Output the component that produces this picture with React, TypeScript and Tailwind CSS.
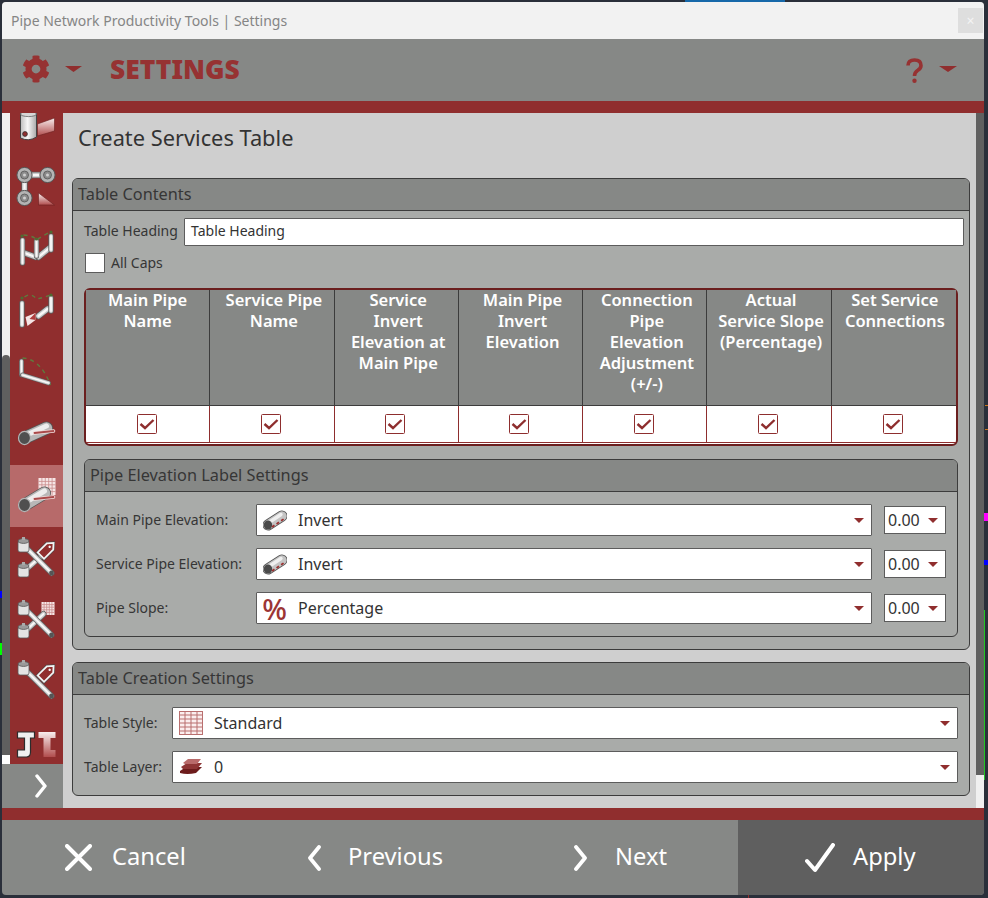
import { FaCog } from 'react-icons/fa';
import type { ReactNode } from 'react';

const RED = '#902e2e';

const Pipe = ({ x1, y1, x2, y2, w = 4 }: { x1: number; y1: number; x2: number; y2: number; w?: number }) => (
  <g strokeLinecap="round">
    <line x1={x1} y1={y1} x2={x2} y2={y2} stroke="#5c5c5c" strokeWidth={w + 1.4} />
    <line x1={x1} y1={y1} x2={x2} y2={y2} stroke="#c9c9c9" strokeWidth={w} />
    <line x1={x1} y1={y1} x2={x2} y2={y2} stroke="#f8f8f8" strokeWidth={w * 0.45} />
  </g>
);

const Ring = ({ cx, cy }: { cx: number; cy: number }) => (
  <g>
    <circle cx={cx} cy={cy} r="7.6" fill="#b4b4b4" stroke="#555" strokeWidth="1" />
    <circle cx={cx} cy={cy} r="4" fill="#8c8c8c" stroke="#555" strokeWidth="0.8" />
    <circle cx={cx} cy={cy} r="1.5" fill="#d0d0d0" />
  </g>
);

const Node = ({ cx, cy }: { cx: number; cy: number }) => (
  <g>
    <rect x={cx - 5.5} y={cy - 4} width="11" height="11" rx="2" fill="#e4e4e4" stroke="#555" strokeWidth="0.8" />
    <ellipse cx={cx} cy={cy - 4} rx="5.5" ry="2.4" fill="#9a9a9a" stroke="#555" strokeWidth="0.8" />
    <rect x={cx - 1.5} y={cy - 8} width="3" height="3" fill="#aaa" />
  </g>
);

const MiniGrid = ({ x, y, s, color = '#c98a8a' }: { x: number; y: number; s: number; color?: string }) => (
  <g>
    <rect x={x} y={y} width={s} height={s} fill="#f6e6e6" />
    {[0.2, 0.4, 0.6, 0.8].map((f) => (
      <g key={f} stroke={color} strokeWidth="0.8">
        <line x1={x + s * f} y1={y} x2={x + s * f} y2={y + s} />
        <line x1={x} y1={y + s * f} x2={x + s} y2={y + s * f} />
      </g>
    ))}
  </g>
);

const Tag = ({ cx, cy }: { cx: number; cy: number }) => {
  const d = `M${cx - 4.5} ${cy - 5} L${cx} ${cy - 10} L${cx + 4.5} ${cy - 5} V${cy + 8} H${cx - 4.5} Z`;
  return (
    <g transform={`rotate(45 ${cx} ${cy})`}>
      <path d={d} fill={RED} stroke="#4a4a4a" strokeWidth="3" />
      <path d={d} fill={RED} stroke="#f4f4f4" strokeWidth="1.8" />
      <circle cx={cx} cy={cy - 4.5} r="1.2" fill="#f4f4f4" />
    </g>
  );
};

const FatPipe = ({ ex, ey, tx, ty, sy }: { ex: number; ey: number; tx: number; ty: number; sy: number }) => (
  <g>
    <line x1={ex} y1={ey} x2={tx} y2={ty} stroke="#555" strokeWidth="13" strokeLinecap="round" />
    <line x1={ex} y1={ey} x2={tx} y2={ty} stroke="#b8b8b8" strokeWidth="11.4" strokeLinecap="round" />
    <line x1={ex} y1={ey - 2} x2={tx} y2={ty - 2} stroke="#ededed" strokeWidth="5" strokeLinecap="round" />
    <ellipse cx={ex} cy={ey} rx="6" ry="6.6" fill="#4f4f4f" stroke="#b5b5b5" strokeWidth="1.2" />
    <line x1={ex + 10} y1={sy + 2} x2={53} y2={sy} stroke="#f2dede" strokeWidth="3.6" strokeLinecap="round" />
    <line x1={ex + 10} y1={sy + 2} x2={53} y2={sy} stroke="#a94a4a" strokeWidth="1.8" strokeLinecap="round" />
  </g>
);

const Dashes = ({ d }: { d: string }) => (
  <path d={d} fill="none" stroke="#5f7a3e" strokeWidth="1.4" strokeDasharray="4 4" />
);

type SideItem = { top: number; active?: boolean; draw: ReactNode };

// viewBox uses the same numbers as the screen, so each icon is offset by its row
const sideItems: SideItem[] = [
  {
    top: 100,
    draw: (
      <g>
        <path d="M37 124 L54 118 V131 L37 136 Z" fill="url(#pinkPipe)" stroke="#6a2020" strokeWidth="0.6" />
        <path d="M20 110 H36 V137 Q28 142 20 138 Z" fill="url(#steel)" stroke="#444" strokeWidth="1" />
        <ellipse cx="28" cy="114" rx="8" ry="2.6" fill="#d6d6d6" stroke="#555" strokeWidth="0.7" />
        <circle cx="24.5" cy="134" r="2.4" fill={RED} stroke="#333" strokeWidth="0.8" />
      </g>
    ),
  },
  {
    top: 162,
    draw: (
      <g>
        <Pipe x1={24} y1={175} x2={47} y2={175} w={5} />
        <Pipe x1={24} y1={175} x2={24} y2={198} w={5} />
        <Ring cx={24} cy={175} />
        <Ring cx={47} cy={175} />
        <Ring cx={24} cy={198} />
        <path d="M38 193 L54 205 H38 Z" fill="url(#pinkPipe)" stroke="#6a2020" strokeWidth="0.6" />
      </g>
    ),
  },
  {
    top: 224,
    draw: (
      <g>
        <Pipe x1={24} y1={253} x2={35} y2={257} w={5} />
        <Pipe x1={38} y1={257} x2={49} y2={248} w={5} />
        <Pipe x1={22} y1={240} x2={22} y2={263} w={4} />
        <Pipe x1={36} y1={241} x2={36} y2={256} w={4} />
        <Pipe x1={50.5} y1={236} x2={50.5} y2={250} w={4} />
        <Dashes d="M23 235 Q34 236 36 240 Q42 236 50 232" />
        <circle cx="21.5" cy="236" r="1.6" fill="#4e6b32" />
        <circle cx="36" cy="239" r="1.6" fill="#4e6b32" />
        <circle cx="50.5" cy="232" r="1.6" fill="#4e6b32" />
      </g>
    ),
  },
  {
    top: 286,
    draw: (
      <g>
        <Pipe x1={38} y1={316} x2={47} y2={309} w={5} />
        <Pipe x1={21.5} y1={303} x2={21.5} y2={325} w={4} />
        <Pipe x1={50.5} y1={298} x2={50.5} y2={311} w={4} />
        <path d="M25 317 L35 313 V320 L27 326 Z" fill="#f4e4e4" />
        <path d="M29 319 L35 313 V320 Z" fill="#b03c3c" />
        <Dashes d="M24 297 Q30 292 36 299 Q42 298 50 295" />
        <circle cx="21.5" cy="298" r="1.6" fill="#4e6b32" />
        <circle cx="50.5" cy="295" r="1.6" fill="#4e6b32" />
      </g>
    ),
  },
  {
    top: 348,
    draw: (
      <g>
        <Pipe x1={21} y1={361} x2={21} y2={375} w={3.5} />
        <Pipe x1={22} y1={375} x2={48} y2={383} w={3.5} />
        <Dashes d="M22 358 Q40 359 50 385" />
      </g>
    ),
  },
  { top: 410, draw: <FatPipe ex={24} ey={438} tx={46} ty={428} sy={431} /> },
  {
    top: 472,
    active: true,
    draw: (
      <g>
        <MiniGrid x={38} y={478} s={17} />
        <FatPipe ex={24} ey={505} tx={44} ty={493} sy={497} />
      </g>
    ),
  },
  {
    top: 534,
    draw: (
      <g>
        <Pipe x1={25} y1={570} x2={42} y2={555} w={4.5} />
        <Pipe x1={24} y1={546} x2={51} y2={573} w={4.5} />
        <circle cx="51" cy="573" r="2.4" fill="#555" />
        <Node cx={23} cy={545} />
        <Node cx={23} cy={570} />
        <Tag cx={46} cy={550} />
      </g>
    ),
  },
  {
    top: 596,
    draw: (
      <g>
        <MiniGrid x={41} y={602} s={13} />
        <Pipe x1={25} y1={631} x2={43} y2={614} w={4.5} />
        <Pipe x1={24} y1={608} x2={51} y2={635} w={4.5} />
        <circle cx="51" cy="635" r="2.4" fill="#555" />
        <Node cx={23} cy={608} />
        <Node cx={23} cy={631} />
      </g>
    ),
  },
  {
    top: 658,
    draw: (
      <g>
        <Pipe x1={24} y1={669} x2={51} y2={696} w={4.5} />
        <circle cx="51" cy="696" r="2.4" fill="#555" />
        <Node cx={23} cy={668} />
        <Tag cx={46} cy={673} />
      </g>
    ),
  },
  {
    top: 720,
    draw: (
      <g>
        <path
          d="M17 732 H34 V738 H30 V752 Q30 757 26 757 H17 V750 H24 V738 H17 Z"
          fill="#f0f0f0"
          stroke="#2c2c2c"
          strokeWidth="1.2"
        />
        <path d="M38 732 H55 V738 H50 V750 H55 V757 H43 V738 H38 Z" fill="url(#pinkPipe)" />
      </g>
    ),
  },
];

const Caret = ({ className }: { className: string }) => (
  <svg viewBox="0 0 10 6" preserveAspectRatio="none" className={className}>
    <path d="M0 0 H10 L5 6 Z" fill={RED} />
  </svg>
);

const PipeGlyph = () => (
  <svg viewBox="0 0 24 22" className="h-[22px] w-[24px]">
    <line x1="5" y1="16" x2="19" y2="7" stroke="#555" strokeWidth="11" strokeLinecap="round" />
    <line x1="5" y1="16" x2="19" y2="7" stroke="#c4c4c4" strokeWidth="9.4" strokeLinecap="round" />
    <line x1="6" y1="13.5" x2="18" y2="5.5" stroke="#efefef" strokeWidth="3.4" strokeLinecap="round" />
    <ellipse cx="5" cy="16" rx="4.2" ry="4.6" fill="#4a4a4a" />
    <line x1="9" y1="18" x2="21.5" y2="9.5" stroke="#9c2f2f" strokeWidth="1.8" strokeDasharray="3 2.5" />
  </svg>
);

const GridGlyph = () => (
  <svg viewBox="0 0 24 24" className="h-[24px] w-[24px]">
    <rect x="0.5" y="0.5" width="23" height="23" fill="#fbeeee" stroke="#b96f6f" />
    {[4, 8, 12, 16, 20].map((v) => (
      <line key={v} x1="0.5" y1={v} x2="23.5" y2={v} stroke="#b96f6f" />
    ))}
    {[6, 12, 18].map((v) => (
      <line key={v} x1={v} y1="0.5" x2={v} y2="23.5" stroke="#b96f6f" />
    ))}
  </svg>
);

const LayersGlyph = () => (
  <svg viewBox="0 0 24 16" className="h-[16px] w-[24px]">
    <path d="M1 12 L7 8 H23 L17 14 Q8 16 1 14 Z" fill="#6d1c1c" />
    <path d="M2 8 L8 4 H23 L18 10 H4 Z" fill="#8e3535" />
    <path d="M4 4 L9 0 H22 L18 5 H6 Z" fill="#b86a6a" />
  </svg>
);

const Tick = () => (
  <svg viewBox="0 0 20 20" className="h-[20px] w-[20px]">
    <rect x="0.5" y="0.5" width="19" height="19" rx="1" fill="#fff" stroke="#8e2e2e" />
    <path d="M3.5 10 L8 14 L16.5 6" fill="none" stroke="#8e2e2e" strokeWidth="2.4" />
  </svg>
);

function Section({ title, children, className }: { title: string; children: ReactNode; className: string }) {
  return (
    <div className={`rounded-[6px] border border-[#3c3c3c] bg-[#a9aba9] ${className}`}>
      <div className="flex h-[32px] items-center rounded-t-[5px] border-b border-[#3c3c3c] bg-[#868886] pl-[5px] text-[16.3px] text-[#363636]">
        {title}
      </div>
      {children}
    </div>
  );
}

function Select({ icon, value }: { icon: ReactNode; value: string }) {
  return (
    <div className="flex h-[32px] flex-1 items-center rounded-[1px] border border-[#5c5c5c] bg-white pr-[7px]">
      <div className="mr-[6px] flex w-[35px] shrink-0 justify-center">{icon}</div>
      <span className="flex-1 text-[16px] text-[#333]">{value}</span>
      <Caret className="h-[5px] w-[10px]" />
    </div>
  );
}

function Precision() {
  return (
    <div className="flex h-[28px] w-[62px] items-center justify-between border border-[#5c5c5c] bg-white pl-[3px] pr-[7px] text-[16px] text-[#333]">
      0.00
      <Caret className="h-[5px] w-[10px]" />
    </div>
  );
}

const elevationRows = [
  { label: 'Main Pipe Elevation:', icon: <PipeGlyph />, value: 'Invert' },
  { label: 'Service Pipe Elevation:', icon: <PipeGlyph />, value: 'Invert' },
  {
    label: 'Pipe Slope:',
    icon: <span className="text-[29px] leading-none font-medium text-[#9c3535]">%</span>,
    value: 'Percentage',
  },
];

const columns = [
  ['Main Pipe', 'Name'],
  ['Service Pipe', 'Name'],
  ['Service', 'Invert', 'Elevation at', 'Main Pipe'],
  ['Main Pipe', 'Invert', 'Elevation'],
  ['Connection', 'Pipe', 'Elevation', 'Adjustment', '(+/-)'],
  ['Actual', 'Service Slope', '(Percentage)'],
  ['Set Service', 'Connections'],
];

export default function App() {
  return (
    <div className="relative h-[898px] w-[988px] overflow-hidden bg-[#2a2f3a] p-[2px] pr-[4px] pb-[3px] font-['Noto_Sans',sans-serif]">
      {/* bits of the drawing behind the dialog */}
      <div className="absolute top-0 left-[685px] h-[2px] w-[100px] bg-[#1769aa]" />
      <div className="absolute top-[591px] left-0 h-[7px] w-[2px] bg-[#0000ff]" />
      <div className="absolute top-[643px] left-0 h-[12px] w-[2px] bg-[#00ff00]" />
      <div className="absolute top-[513px] right-0 h-[8px] w-[4px] bg-[#ff00ff]" />
      <div className="absolute top-[560px] right-0 h-[5px] w-[4px] bg-[#0000ff]" />
      <div className="absolute top-[610px] right-[3px] h-[170px] w-px bg-[#22c722]" />
      <div className="absolute top-[405px] right-0 h-[25px] w-[3px] border-y border-[#c9751c]" />
      <div className="absolute bottom-0 left-[748px] h-[3px] w-px bg-[#902e2e]" />

      <svg className="absolute h-0 w-0">
        <defs>
          <linearGradient id="steel" x1="0" x2="1" y1="0" y2="0">
            <stop offset="0" stopColor="#bdbdbd" />
            <stop offset="0.45" stopColor="#f7f7f7" />
            <stop offset="1" stopColor="#a8a8a8" />
          </linearGradient>
          <linearGradient id="pinkPipe" x1="0" x2="0" y1="0" y2="1">
            <stop offset="0" stopColor="#f8eeee" />
            <stop offset="1" stopColor="#b14d4d" />
          </linearGradient>
        </defs>
      </svg>

      <div className="flex h-full flex-col overflow-hidden rounded-[4px] bg-[#868886]">
        {/* title bar */}
        <div className="flex h-[37px] items-center justify-between bg-[#f2f2f2] pr-[1px] pl-[9px]">
          <span className="text-[14px] text-[#858585]">Pipe Network Productivity Tools | Settings</span>
          <div className="flex h-[25px] w-[25px] items-center justify-center bg-[#dedede] text-[14px] text-[#f4f4f4]">
            ×
          </div>
        </div>

        {/* header */}
        <div className="flex h-[62px] items-center bg-[#868886] pr-[27px] pl-[20px]">
          <FaCog className="mb-[2px] h-[28px] w-[28px] text-[#963232]" />
          <Caret className="mb-[2px] ml-[15px] h-[6px] w-[17px]" />
          <span className="mb-[2px] ml-[28px] text-[26.4px] leading-none font-black text-[#963232]">SETTINGS</span>
          <svg viewBox="0 0 17 25" className="ml-auto h-[25px] w-[17px]">
            <path
              d="M2 7.5 Q2 2 8.5 2 Q15 2 15 7.5 Q15 10.5 11.5 12.5 Q8.5 14.5 8.5 18"
              fill="none"
              stroke="#963232"
              strokeWidth="3.6"
            />
            <circle cx="8.5" cy="22.8" r="2.2" fill="#963232" />
          </svg>
          <Caret className="mb-[2px] ml-[16px] h-[6px] w-[18px]" />
        </div>
        <div className="h-[12px] bg-[#902e2e]" />

        {/* body */}
        <div className="flex h-[695px] bg-[#cfcfcf]">
          <div className="flex w-[61px] shrink-0 flex-col">
            <div className="flex h-[651px] overflow-hidden">
              <div className="flex w-[8px] shrink-0 flex-col bg-[#f0f0f0]">
                <div className="mt-[242px] flex-1 rounded-t-[4px] bg-[#5f5f5f]" />
                <div className="h-[9px] bg-white" />
              </div>
              <div className="flex-1 overflow-hidden bg-[#902e2e]">
                <div className="-mt-[20px]">
                  {sideItems.map((item) => (
                    <div
                      key={item.top}
                      className={`flex h-[62px] items-center justify-center ${item.active ? 'bg-[#b76a6a]' : ''}`}
                    >
                      <svg viewBox={`12.5 ${item.top} 48 48`} className="h-[48px] w-[48px]">
                        {item.draw}
                      </svg>
                    </div>
                  ))}
                </div>
              </div>
            </div>
            <div className="flex h-[44px] items-center bg-[#868886] pl-[33px]">
              <svg viewBox="0 0 12 24" className="h-[24px] w-[12px]">
                <path d="M2 2 L10 12 L2 22" fill="none" stroke="#fff" strokeWidth="3.4" strokeLinecap="round" strokeLinejoin="round" />
              </svg>
            </div>
          </div>

          {/* content */}
          <div className="flex-1 overflow-hidden pt-[9px] pr-[6px] pl-[9px]">
            <h1 className="mb-[24px] ml-[6px] text-[21.8px] leading-[32px] text-[#333]">Create Services Table</h1>

            <Section title="Table Contents" className="h-[472px]">
              <div className="pt-[7px] pr-[5px] pl-[11px]">
                <div className="flex items-center">
                  <span className="-mt-[3px] w-[100px] text-[14px] text-[#363636]">Table Heading</span>
                  <div className="flex h-[28px] flex-1 items-center rounded-[1px] border border-[#5c5c5c] bg-white pb-[3px] pl-[6px] text-[14px] text-[#333]">
                    Table Heading
                  </div>
                </div>
                <div className="mt-[7px] ml-[1px] flex h-[20px] items-center gap-[6px]">
                  <div className="h-[20px] w-[20px] border border-[#5c5c5c] bg-white" />
                  <span className="-mt-[2px] text-[14px] text-[#363636]">All Caps</span>
                </div>

                <div className="mt-[15px] mr-[6px] rounded-[6px] border-2 border-[#6b1f1f] bg-white">
                  <div className="grid grid-cols-7">
                    {columns.map((lines, i) => (
                      <div key={i} className="flex flex-col">
                        <div
                          className={`h-[116px] border-b border-[#3c3c3c] bg-[#868886] text-center text-[16.5px] leading-[21px] font-semibold text-white ${
                            i < 6 ? 'border-r border-r-[#3c3c3c]' : 'pl-[2px]'
                          } ${i > 0 && i < 6 ? 'pl-[4px]' : ''}`}
                        >
                          <div className="-translate-y-[1px]">
                            {lines.map((line, j) => (
                              <div key={j}>{line}</div>
                            ))}
                          </div>
                        </div>
                        <div
                          className={`flex h-[37px] items-center justify-center border-b border-[#8e2e2e] pr-[2px] ${
                            i < 6 ? 'border-r' : ''
                          }`}
                        >
                          <Tick />
                        </div>
                      </div>
                    ))}
                  </div>
                  <div className="h-[1px]" />
                </div>

                <div className="mt-[13px] mr-[6px] h-[178px] rounded-[6px] border border-[#3c3c3c] bg-[#a9aba9]">
                  <div className="flex h-[32px] items-center rounded-t-[5px] border-b border-[#3c3c3c] bg-[#868886] pl-[5px] text-[16.3px] text-[#363636]">
                    Pipe Elevation Label Settings
                  </div>
                  <div className="flex flex-col gap-[12px] pt-[12px] pr-[11px] pl-[11px]">
                    {elevationRows.map((row) => (
                      <div key={row.label} className="flex items-center">
                        <span className="-mt-[2px] w-[160px] shrink-0 text-[14px] text-[#363636]">{row.label}</span>
                        <Select icon={row.icon} value={row.value} />
                        <div className="ml-[12px]">
                          <Precision />
                        </div>
                      </div>
                    ))}
                  </div>
                </div>
              </div>
            </Section>

            <Section title="Table Creation Settings" className="mt-[12px] h-[134px]">
              <div className="flex flex-col gap-[12px] pt-[12px] pr-[11px] pl-[11px]">
                <div className="flex items-center">
                  <span className="-mt-[2px] w-[88px] shrink-0 text-[14px] text-[#363636]">Table Style:</span>
                  <Select icon={<GridGlyph />} value="Standard" />
                </div>
                <div className="flex items-center">
                  <span className="-mt-[2px] w-[88px] shrink-0 text-[14px] text-[#363636]">Table Layer:</span>
                  <Select icon={<LayersGlyph />} value="0" />
                </div>
              </div>
            </Section>
          </div>

          {/* right scrollbar */}
          <div className="w-[8px] shrink-0 bg-[#f0f0f0]">
            <div className="h-[662px] bg-[#606060]" />
          </div>
        </div>

        <div className="h-[12px] bg-[#902e2e]" />

        {/* footer */}
        <div className="grid flex-1 grid-cols-[245px_245px_246px_246px] text-[23.7px] text-white">
          <div className="flex items-center pl-[63px]">
            <svg viewBox="0 0 27 27" className="h-[27px] w-[27px]">
              <path d="M2 2 L25 25 M25 2 L2 25" stroke="#fff" strokeWidth="4" strokeLinecap="round" />
            </svg>
            <span className="-mt-[1px] ml-[20px]">Cancel</span>
          </div>
          <div className="flex items-center pl-[60px]">
            <svg viewBox="0 0 15 26" className="h-[26px] w-[15px]">
              <path d="M12 2 L3 13 L12 24" fill="none" stroke="#fff" strokeWidth="3.8" strokeLinecap="round" strokeLinejoin="round" />
            </svg>
            <span className="-mt-[1px] ml-[26px]">Previous</span>
          </div>
          <div className="flex items-center pl-[81px]">
            <svg viewBox="0 0 15 26" className="h-[26px] w-[15px]">
              <path d="M3 2 L12 13 L3 24" fill="none" stroke="#fff" strokeWidth="3.8" strokeLinecap="round" strokeLinejoin="round" />
            </svg>
            <span className="-mt-[1px] ml-[27px]">Next</span>
          </div>
          <div className="flex items-center bg-[#5f5f5f] pl-[67px]">
            <svg viewBox="0 0 30 30" className="h-[30px] w-[30px]">
              <path d="M2 18 L10 27 L28 2" fill="none" stroke="#fff" strokeWidth="4" strokeLinecap="round" strokeLinejoin="round" />
            </svg>
            <span className="-mt-[1px] ml-[18px]">Apply</span>
          </div>
        </div>
      </div>
    </div>
  );
}
